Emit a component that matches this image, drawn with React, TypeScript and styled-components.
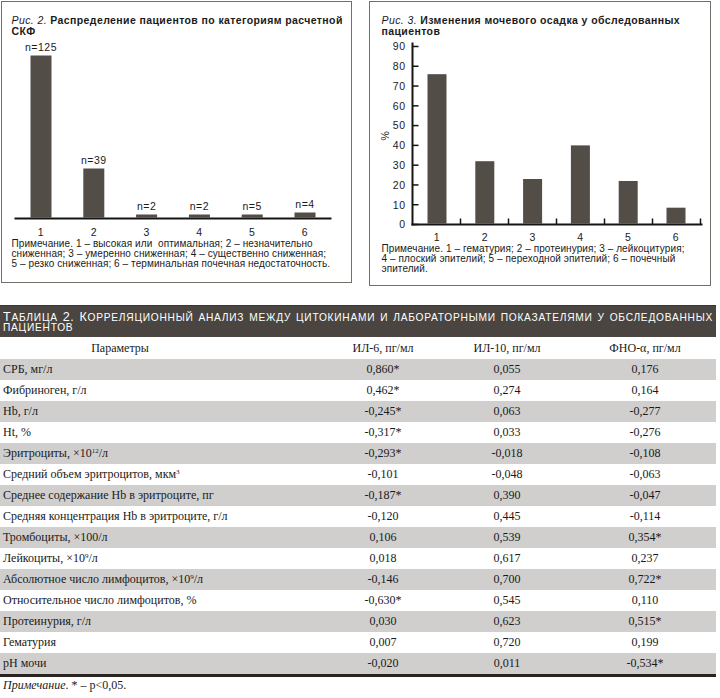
import React from "react";
import styled, { createGlobalStyle } from "styled-components";

const GlobalStyle = createGlobalStyle`
  html, body { margin: 0; padding: 0; background: #ffffff; }
  body { width: 720px; font-family: "Liberation Sans", Arial, sans-serif; color: #1b1b1b; }
`;

const Page = styled.div`
  width: 720px;
`;

const FigureRow = styled.div`
  display: flex;
  align-items: flex-start;
  gap: 17px;
  padding: 1px 0 0 1px;
  height: 285px;
`;

const Figure = styled.figure<{ $w: number; $h: number }>`
  margin: 0;
  box-sizing: border-box;
  width: ${(p) => p.$w}px;
  height: ${(p) => p.$h}px;
  border: 1.5px solid #756f69;
  display: flex;
  flex-direction: column;
  flex: none;
`;

const Caption = styled.figcaption<{ $pad: number }>`
  padding: 13px 0 0 ${(p) => p.$pad}px;
  height: 22px;
  font-size: 10.5px;
  line-height: 11px;
  letter-spacing: 0.4px;
  font-weight: 700;
  color: #1a1a1a;
  white-space: nowrap;
`;

const CaptionLabel = styled.span`
  font-style: italic;
  font-weight: 400;
`;

const ChartSvg = styled.svg`
  display: block;
  flex: none;
  font-family: "Liberation Sans", Arial, sans-serif;
  font-size: 10.5px;
  letter-spacing: 0.5px;
  fill: #1a1a1a;
`;

const Bar = styled.rect`
  fill: #534d48;
`;

const AxisLine = styled.line<{ $w?: number }>`
  stroke: #151515;
  stroke-width: ${(p) => p.$w ?? 2}px;
`;

const Note = styled.p<{ $pad: number }>`
  margin: 0;
  padding-left: ${(p) => p.$pad}px;
  font-size: 10px;
  line-height: 10px;
  letter-spacing: 0.08px;
  color: #1a1a1a;
`;

const NoteLine = styled.span`
  display: block;
  white-space: pre;
`;

const TableBlock = styled.section`
  margin-top: 19px;
  width: 716px;
  font-family: "Liberation Serif", "Times New Roman", serif;
  font-size: 12px;
  color: #1a1a1a;
`;

const TableTitle = styled.h2`
  margin: 0;
  box-sizing: border-box;
  height: 32px;
  padding: 5.5px 3px 0 3px;
  background: #4a4540;
  border-top: 1px solid #3a3531;
  color: #ffffff;
  font-family: "Liberation Sans", Arial, sans-serif;
  font-weight: 400;
  font-size: 10.2px;
  line-height: 10.5px;
  text-transform: uppercase;
  letter-spacing: 0.75px;
`;

const TitleLine = styled.span`
  display: block;
  text-align: justify;
  text-align-last: justify;
`;

const TitleTail = styled.span`
  display: block;
`;

const Initial = styled.span`
  font-size: 12.5px;
  line-height: 10px;
`;

const Rows = styled.div`
  border-bottom: 3px solid #29241f;
`;

const Row = styled.div<{ $shade?: boolean; $h?: number }>`
  display: grid;
  grid-template-columns: 326px 114px 134px 142px;
  height: ${(p) => p.$h ?? 21}px;
  line-height: ${(p) => p.$h ?? 21}px;
  background: ${(p) => (p.$shade ? "#d0cfce" : "transparent")};
`;

const Cell = styled.div`
  text-align: center;
  white-space: nowrap;
`;

const NameCell = styled.div`
  padding-left: 3px;
  white-space: nowrap;
`;

const HeadNameCell = styled.div`
  text-align: center;
  padding-right: 86px;
`;

const Sup = styled.sup`
  font-size: 7px;
  line-height: 0;
  vertical-align: 4px;
`;

const Footer = styled.p`
  margin: 1px 0 0;
  padding-left: 3px;
  font-family: "Liberation Serif", "Times New Roman", serif;
  font-size: 12px;
  line-height: 14px;
  color: #1a1a1a;
`;

const gfr = [
  { n: "n=125", top: 56 },
  { n: "n=39", top: 169 },
  { n: "n=2", top: 215 },
  { n: "n=2", top: 215 },
  { n: "n=5", top: 215 },
  { n: "n=4", top: 213 },
];

const sediment = [76, 32, 23, 40, 22, 8.5];

type RowData = { pre: string; sup?: string; post?: string; v: [string, string, string] };

const rows: RowData[] = [
  { pre: "СРБ, мг/л", v: ["0,860*", "0,055", "0,176"] },
  { pre: "Фибриноген, г/л", v: ["0,462*", "0,274", "0,164"] },
  { pre: "Hb, г/л", v: ["-0,245*", "0,063", "-0,277"] },
  { pre: "Ht, %", v: ["-0,317*", "0,033", "-0,276"] },
  { pre: "Эритроциты, ×10", sup: "12", post: "/л", v: ["-0,293*", "-0,018", "-0,108"] },
  { pre: "Средний объем эритроцитов, мкм", sup: "3", v: ["-0,101", "-0,048", "-0,063"] },
  { pre: "Среднее содержание Hb в эритроците, пг", v: ["-0,187*", "0,390", "-0,047"] },
  { pre: "Средняя концентрация Hb в эритроците, г/л", v: ["-0,120", "0,445", "-0,114"] },
  { pre: "Тромбоциты, ×100/л", v: ["0,106", "0,539", "0,354*"] },
  { pre: "Лейкоциты, ×10", sup: "9", post: "/л", v: ["0,018", "0,617", "0,237"] },
  { pre: "Абсолютное число лимфоцитов, ×10", sup: "9", post: "/л", v: ["-0,146", "0,700", "0,722*"] },
  { pre: "Относительное число лимфоцитов, %", v: ["-0,630*", "0,545", "0,110"] },
  { pre: "Протеинурия, г/л", v: ["0,030", "0,623", "0,515*"] },
  { pre: "Гематурия", v: ["0,007", "0,720", "0,199"] },
  { pre: "pH мочи", v: ["-0,020", "0,011", "-0,534*"] },
];

const yOf = (v: number) => 225 - v * 1.978;

function GfrChart() {
  return (
    <ChartSvg width={348} height={202} viewBox="2.5 37.5 348 202">
      {gfr.map((b, i) => {
        const x = 31 + i * 52.8;
        return (
          <g key={i}>
            <Bar x={x} y={b.top} width={21} height={218 - b.top} />
            <text x={x + 10.5} y={b.top - 5} textAnchor="middle">
              {b.n}
            </text>
            <text x={x + 10.5} y={236} textAnchor="middle">
              {i + 1}
            </text>
          </g>
        );
      })}
      <AxisLine x1={15} y1={219} x2={332} y2={219} />
    </ChartSvg>
  );
}

function SedimentChart() {
  const ticks = [0, 10, 20, 30, 40, 50, 60, 70, 80, 90];
  return (
    <ChartSvg width={339} height={207} viewBox="370.5 37.5 339 207">
      {ticks.map((t) => (
        <g key={t}>
          <AxisLine $w={1.5} x1={413} y1={yOf(t)} x2={419} y2={yOf(t)} />
          <text x={406} y={yOf(t) + 3.8} textAnchor="end">
            {t}
          </text>
        </g>
      ))}
      <text x={389} y={136} textAnchor="middle" transform="rotate(-90 389 136)">
        %
      </text>
      {sediment.map((v, i) => {
        const x = 428 + i * 47.8;
        return (
          <g key={i}>
            <Bar x={x} y={yOf(v)} width={19} height={224 - yOf(v)} />
            <text x={x + 9.5} y={241} textAnchor="middle">
              {i + 1}
            </text>
            <AxisLine $w={1.5} x1={461 + i * 48} y1={219} x2={461 + i * 48} y2={225} />
          </g>
        );
      })}
      <AxisLine x1={413} y1={43} x2={413} y2={226} />
      <AxisLine x1={412} y1={225} x2={703} y2={225} />
    </ChartSvg>
  );
}

export default function App() {
  return (
    <Page>
      <GlobalStyle />
      <FigureRow>
        <Figure $w={351} $h={282}>
          <Caption $pad={9.5}>
            <CaptionLabel>Рис. 2.</CaptionLabel> Распределение пациентов по категориям расчетной
            <br />
            СКФ
          </Caption>
          <GfrChart />
          <Note $pad={9.5}>
            <NoteLine>Примечание. 1 – высокая или  оптимальная; 2 – незначительно</NoteLine>
            <NoteLine>сниженная; 3 – умеренно сниженная; 4 – существенно сниженная;</NoteLine>
            <NoteLine>5 – резко сниженная; 6 – терминальная почечная недостаточность.</NoteLine>
          </Note>
        </Figure>
        <Figure $w={342} $h={285}>
          <Caption $pad={11.5}>
            <CaptionLabel>Рис. 3.</CaptionLabel> Изменения мочевого осадка у обследованных
            <br />
            пациентов
          </Caption>
          <SedimentChart />
          <Note $pad={11.5}>
            <NoteLine>Примечание. 1 – гематурия; 2 – протеинурия; 3 – лейкоцитурия;</NoteLine>
            <NoteLine>4 – плоский эпителий; 5 – переходной эпителий; 6 – почечный</NoteLine>
            <NoteLine>эпителий.</NoteLine>
          </Note>
        </Figure>
      </FigureRow>
      <TableBlock>
        <TableTitle>
          <TitleLine>
            <Initial>Т</Initial>аблица <Initial>2.</Initial> <Initial>К</Initial>орреляционный анализ
            между цитокинами и лабораторными показателями у обследованных
          </TitleLine>
          <TitleTail>пациентов</TitleTail>
        </TableTitle>
        <Rows>
          <Row $h={22}>
            <HeadNameCell>Параметры</HeadNameCell>
            <Cell>ИЛ-6, пг/мл</Cell>
            <Cell>ИЛ-10, пг/мл</Cell>
            <Cell>ФНО-α, пг/мл</Cell>
          </Row>
          {rows.map((r, i) => (
            <Row key={i} $shade={i % 2 === 0}>
              <NameCell>
                {r.pre}
                {r.sup && <Sup>{r.sup}</Sup>}
                {r.post}
              </NameCell>
              <Cell>{r.v[0]}</Cell>
              <Cell>{r.v[1]}</Cell>
              <Cell>{r.v[2]}</Cell>
            </Row>
          ))}
        </Rows>
      </TableBlock>
      <Footer>
        <i>Примечание</i>. * – p&lt;0,05.
      </Footer>
    </Page>
  );
}
